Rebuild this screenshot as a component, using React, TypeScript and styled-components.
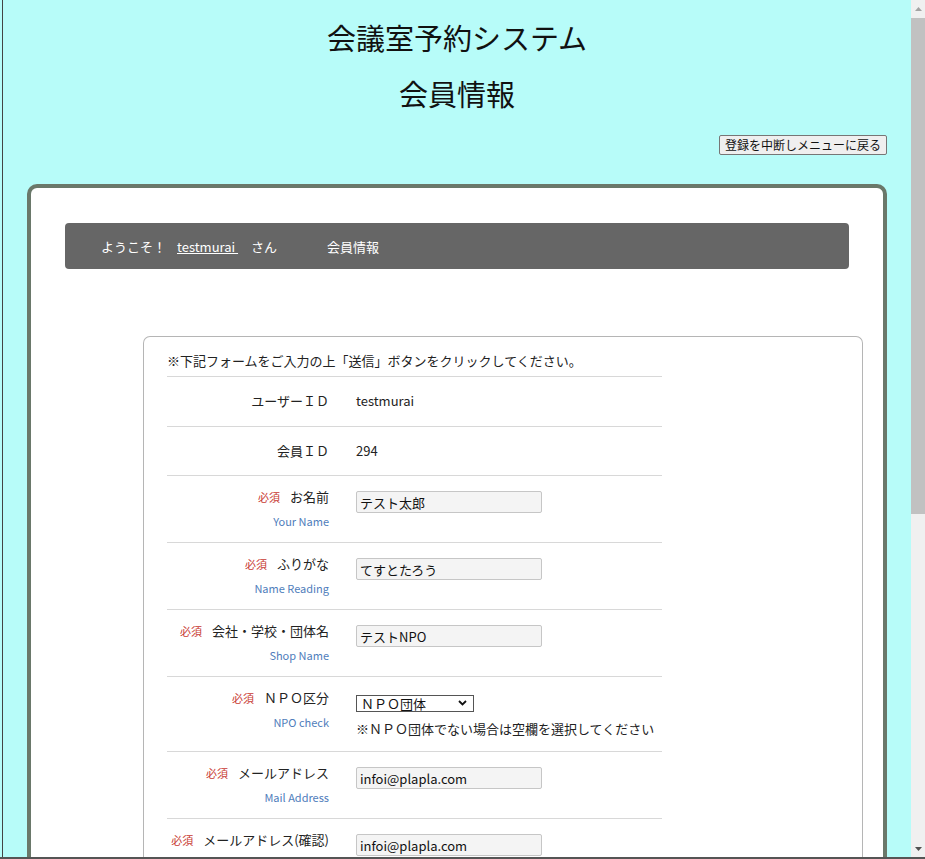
import styled, { createGlobalStyle } from "styled-components";

// ── globals ───────────────────────────────────────────────────────────────────

const GlobalStyle = createGlobalStyle`
  html, body {
    margin: 0;
    padding: 0;
    overflow: hidden;
  }
  body {
    font-family: "Noto Sans CJK JP", "Noto Sans", sans-serif;
    font-size: 13px;
    line-height: 19px;
    color: #222;
  }
  * { box-sizing: border-box; }
`;

// ── frame ─────────────────────────────────────────────────────────────────────

const Frame = styled.div`
  display: flex;
  width: 925px;
  height: 859px;
  overflow: hidden;
  padding-left: 2px;
  background: #b7fcf9;
  border-bottom: 2px solid #555;
`;

const Page = styled.div`
  flex: 1;
  min-width: 0;
  display: flex;
  flex-direction: column;
  padding: 0 24px;
  border-left: 1px solid #444;
  overflow: hidden;
`;

const ScrollTrack = styled.div`
  width: 14px;
  flex: none;
  display: flex;
  flex-direction: column;
  background: #f0f0f0;
`;

const ScrollArrow = styled.div`
  height: 17px;
  display: flex;
  align-items: center;
  justify-content: center;
`;

const ScrollThumb = styled.div`
  height: 496px;
  margin-top: 1px;
  background: #c1c1c1;
`;

const ScrollSpacer = styled.div`
  flex: 1;
`;

// ── header ────────────────────────────────────────────────────────────────────

const Title = styled.h1<{ $gap: number }>`
  margin: ${(p) => p.$gap}px 0 0;
  font-size: 29px;
  line-height: 40px;
  font-weight: 400;
  text-align: center;
  color: #111;
`;

const ButtonRow = styled.div`
  display: flex;
  justify-content: flex-end;
  margin-top: 22px;
`;

const BackButton = styled.button`
  height: 20px;
  padding: 0 5px;
  font-family: inherit;
  font-size: 12px;
  line-height: 18px;
  color: #111;
  background: #efefef;
  border: 1px solid #767676;
  border-radius: 2px;
`;

// ── card + nav ────────────────────────────────────────────────────────────────

const Card = styled.div`
  flex: 1;
  margin-top: 29px;
  padding: 35px 34px 0;
  background: #fff;
  border: 4px solid #6a786a;
  border-bottom: none;
  border-radius: 10px 10px 0 0;
`;

const NavBar = styled.div`
  height: 46px;
  display: flex;
  align-items: center;
  padding-left: 36px;
  background: #666;
  border-radius: 4px;
  color: #fff;
`;

const NavText = styled.span<{ $ml?: number }>`
  margin-left: ${(p) => p.$ml ?? 0}px;
  white-space: pre;
`;

const NavLink = styled.a`
  margin-left: 11px;
  color: #fff;
  text-decoration: underline;
  white-space: pre;
`;

// ── form ──────────────────────────────────────────────────────────────────────

const FormBox = styled.div`
  width: 720px;
  margin: 67px 0 0 78px;
  padding: 14px 0 0 23px;
  border: 1px solid #b5b5b5;
  border-bottom: none;
  border-radius: 7px 7px 0 0;
  min-height: 600px;
`;

const Intro = styled.p`
  margin: 0 0 6px;
`;

const Table = styled.div`
  width: 495px;
`;

const Row = styled.div<{ $simple?: boolean }>`
  display: grid;
  grid-template-columns: 176px 1fr;
  align-items: start;
  border-top: 1px solid #d8d8d8;
  padding: ${(p) => (p.$simple ? "14px 0 14.5px" : "11px 0 13px")};
`;

const LabelCell = styled.div`
  display: flex;
  flex-direction: column;
  align-items: flex-end;
  padding-right: 14px;
`;

const LabelLine = styled.div`
  display: flex;
  align-items: center;
  gap: 10px;
  line-height: 20px;
  white-space: nowrap;
`;

const Required = styled.span`
  font-size: 11px;
  color: #c83a32;
`;

const SubLabel = styled.div`
  margin-top: 6px;
  font-size: 11px;
  line-height: 16px;
  color: #4f7dbb;
`;

const ValueCell = styled.div`
  padding-left: 13px;
  display: flex;
  flex-direction: column;
  align-items: flex-start;
  line-height: 20px;
`;

const TextInput = styled.input`
  display: block;
  width: 186px;
  height: 22px;
  margin-top: 4px;
  padding: 0 3px;
  font-family: inherit;
  font-size: 13px;
  color: #111;
  background: #f4f4f4;
  border: 1px solid #c6c6c6;
  border-radius: 2px;
  outline: none;
`;

const SelectWrap = styled.div`
  position: relative;
  margin-top: 7px;
  height: 17px;
`;

const Select = styled.select`
  display: block;
  appearance: none;
  width: 118px;
  height: 17px;
  padding: 0 0 0 4px;
  font-family: inherit;
  font-size: 13px;
  line-height: 15px;
  color: #111;
  background: #fff;
  border: 1px solid #555;
  border-radius: 0;
`;

const Chevron = styled.svg`
  position: absolute;
  right: 7px;
  top: 5px;
  pointer-events: none;
`;

const Note = styled.div`
  margin-top: 7px;
  line-height: 19px;
`;

type Field = {
  label: string;
  sub?: string;
  value: string;
};

const fields: Field[] = [
  { label: "お名前", sub: "Your Name", value: "テスト太郎" },
  { label: "ふりがな", sub: "Name Reading", value: "てすとたろう" },
  { label: "会社・学校・団体名", sub: "Shop Name", value: "テストNPO" },
];

const mails: Field[] = [
  { label: "メールアドレス", sub: "Mail Address", value: "infoi@plapla.com" },
  { label: "メールアドレス(確認)", value: "infoi@plapla.com" },
];

function FieldRow({ f }: { f: Field }) {
  return (
    <Row>
      <LabelCell>
        <LabelLine>
          <Required>必須</Required>
          <span>{f.label}</span>
        </LabelLine>
        {f.sub && <SubLabel>{f.sub}</SubLabel>}
      </LabelCell>
      <ValueCell>
        <TextInput defaultValue={f.value} />
      </ValueCell>
    </Row>
  );
}

// ── component ─────────────────────────────────────────────────────────────────

export default function App() {
  return (
    <>
      <GlobalStyle />
      <Frame>
        <Page>
          <Title $gap={17}>会議室予約システム</Title>
          <Title $gap={16}>会員情報</Title>

          <ButtonRow>
            <BackButton>登録を中断しメニューに戻る</BackButton>
          </ButtonRow>

          <Card>
            <NavBar>
              <NavText>ようこそ！</NavText>
              <NavLink href="#">testmurai </NavLink>
              <NavText $ml={13}>さん</NavText>
              <NavText $ml={50}>会員情報</NavText>
            </NavBar>

            <FormBox>
              <Intro>※下記フォームをご入力の上「送信」ボタンをクリックしてください。</Intro>
              <Table>
                <Row $simple>
                  <LabelCell>
                    <LabelLine>ユーザーＩＤ</LabelLine>
                  </LabelCell>
                  <ValueCell>testmurai</ValueCell>
                </Row>
                <Row $simple>
                  <LabelCell>
                    <LabelLine>会員ＩＤ</LabelLine>
                  </LabelCell>
                  <ValueCell>294</ValueCell>
                </Row>

                {fields.map((f) => (
                  <FieldRow key={f.label} f={f} />
                ))}

                <Row>
                  <LabelCell>
                    <LabelLine>
                      <Required>必須</Required>
                      <span>ＮＰＯ区分</span>
                    </LabelLine>
                    <SubLabel>NPO check</SubLabel>
                  </LabelCell>
                  <ValueCell>
                    <SelectWrap>
                      <Select defaultValue="npo">
                        <option value="npo">ＮＰＯ団体</option>
                        <option value=""></option>
                      </Select>
                      <Chevron width="9" height="6" viewBox="0 0 9 6">
                        <polyline
                          points="1,1 4.5,4.5 8,1"
                          fill="none"
                          stroke="#111"
                          strokeWidth="1.8"
                        />
                      </Chevron>
                    </SelectWrap>
                    <Note>※ＮＰＯ団体でない場合は空欄を選択してください</Note>
                  </ValueCell>
                </Row>

                {mails.map((f) => (
                  <FieldRow key={f.label} f={f} />
                ))}
              </Table>
            </FormBox>
          </Card>
        </Page>

        <ScrollTrack>
          <ScrollArrow>
            <svg width="7" height="4" viewBox="0 0 7 4">
              <polygon points="0,4 3.5,0 7,4" fill="#a3a3a3" />
            </svg>
          </ScrollArrow>
          <ScrollThumb />
          <ScrollSpacer />
          <ScrollArrow>
            <svg width="7" height="4" viewBox="0 0 7 4">
              <polygon points="0,0 3.5,4 7,0" fill="#505050" />
            </svg>
          </ScrollArrow>
        </ScrollTrack>
      </Frame>
    </>
  );
}
